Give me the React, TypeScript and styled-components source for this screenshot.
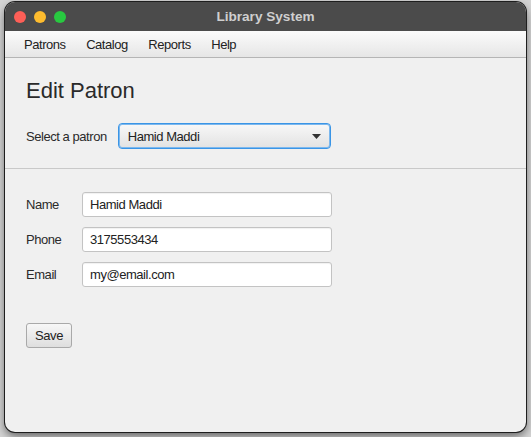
import React from "react";
import styled, { createGlobalStyle } from "styled-components";

const Global = createGlobalStyle`
  html, body { margin: 0; padding: 0; }
  body {
    width: 531px;
    height: 437px;
    overflow: hidden;
    background: #d4d4d4;
    font-family: "Liberation Sans", Arial, sans-serif;
  }
`;

const Window = styled.div`
  margin: 2px 0 0 5px;
  width: 521px;
  height: 430px;
  border-radius: 10px;
  overflow: hidden;
  background: #f0f0f0;
  box-shadow: 0 0 0 1px #1e1e1e, 0 4px 10px rgba(0, 0, 0, 0.55);
  display: flex;
  flex-direction: column;
`;

const TitleBar = styled.div`
  height: 29px;
  background: #4b4b4b;
  display: flex;
  align-items: center;
  position: relative;
  padding-left: 9px;
  gap: 8px;
  flex-shrink: 0;
`;

const Light = styled.span<{ $c: string }>`
  width: 12px;
  height: 12px;
  border-radius: 50%;
  background: ${(p) => p.$c};
`;

const Title = styled.div`
  position: absolute;
  left: 0;
  right: 0;
  text-align: center;
  color: #cfcfcf;
  font-weight: bold;
  font-size: 13.6px;
  pointer-events: none;
`;

const MenuBar = styled.div`
  height: 26px;
  background: linear-gradient(#fbfbfb, #e6e6e6);
  border-bottom: 1px solid #b5b5b5;
  display: flex;
  align-items: center;
  padding-left: 14px;
  flex-shrink: 0;
`;

const MenuItem = styled.div`
  font-size: 13px;
  letter-spacing: -0.45px;
  color: #222;
  padding: 0 5px;
  margin-right: 10.5px;
`;

const Content = styled.div`
  padding: 20px 0 0 0;
  display: flex;
  flex-direction: column;
`;

const Section = styled.div`
  padding: 0 21px;
  display: flex;
  flex-direction: column;
`;

const Heading = styled.h1`
  margin: 0;
  font-weight: normal;
  font-size: 22px;
  line-height: 26px;
  color: #2a2a2a;
`;

const SelectRow = styled.div`
  margin-top: 19px;
  display: flex;
  align-items: center;
  gap: 11px;
`;

const Label = styled.span<{ $w?: number }>`
  font-size: 13px;
  letter-spacing: -0.45px;
  color: #2a2a2a;
  width: ${(p) => (p.$w ? `${p.$w}px` : "auto")};
  flex-shrink: 0;
`;

const Combo = styled.div`
  width: 213px;
  height: 26px;
  box-sizing: border-box;
  border-radius: 4px;
  border: 1px solid #3a95e6;
  box-shadow: inset 0 0 0 1px #7cb8ee;
  background: linear-gradient(#f8f8f8, #e2e2e2);
  display: flex;
  align-items: center;
  justify-content: space-between;
  padding: 0 9px 0 9px;
`;

const ComboText = styled.span`
  font-size: 13px;
  letter-spacing: -0.45px;
  color: #222;
`;

const Separator = styled.div`
  margin-top: 19px;
  height: 1px;
  background: #c9c9c9;
`;

const Form = styled.div`
  padding: 23px 21px 0 21px;
  display: flex;
  flex-direction: column;
  gap: 10px;
`;

const FieldRow = styled.div`
  display: flex;
  align-items: center;
`;

const Input = styled.div`
  width: 250px;
  height: 25px;
  box-sizing: border-box;
  background: #fff;
  border: 1px solid #c3c3c3;
  border-radius: 3px;
  box-shadow: inset 0 1px 1px rgba(0, 0, 0, 0.06);
  display: flex;
  align-items: center;
  padding-left: 7px;
  font-size: 13px;
  letter-spacing: -0.45px;
  color: #222;
`;

const Button = styled.button`
  margin: 36px 0 0 21px;
  align-self: flex-start;
  width: 46px;
  height: 25px;
  box-sizing: border-box;
  border: 1px solid #a9a9a9;
  border-radius: 3px;
  background: linear-gradient(#f7f7f7, #dedede);
  font-family: "Liberation Sans", Arial, sans-serif;
  font-size: 13px;
  letter-spacing: -0.45px;
  color: #222;
  padding: 0;
`;

export default function App() {
  return (
    <>
      <Global />
      <Window>
        <TitleBar>
          <Light $c="#fe5f57" />
          <Light $c="#febc2e" />
          <Light $c="#28c840" />
          <Title>Library System</Title>
        </TitleBar>
        <MenuBar>
          <MenuItem>Patrons</MenuItem>
          <MenuItem>Catalog</MenuItem>
          <MenuItem>Reports</MenuItem>
          <MenuItem>Help</MenuItem>
        </MenuBar>
        <Content>
          <Section>
            <Heading>Edit Patron</Heading>
            <SelectRow>
              <Label>Select a patron</Label>
              <Combo>
                <ComboText>Hamid Maddi</ComboText>
                <svg width="9" height="5" viewBox="0 0 9 5">
                  <path d="M0 0 H9 L4.5 5 Z" fill="#333" />
                </svg>
              </Combo>
            </SelectRow>
          </Section>
          <Separator />
          <Form>
            <FieldRow>
              <Label $w={56}>Name</Label>
              <Input>Hamid Maddi</Input>
            </FieldRow>
            <FieldRow>
              <Label $w={56}>Phone</Label>
              <Input>3175553434</Input>
            </FieldRow>
            <FieldRow>
              <Label $w={56}>Email</Label>
              <Input>my@email.com</Input>
            </FieldRow>
          </Form>
          <Button>Save</Button>
        </Content>
      </Window>
    </>
  );
}
